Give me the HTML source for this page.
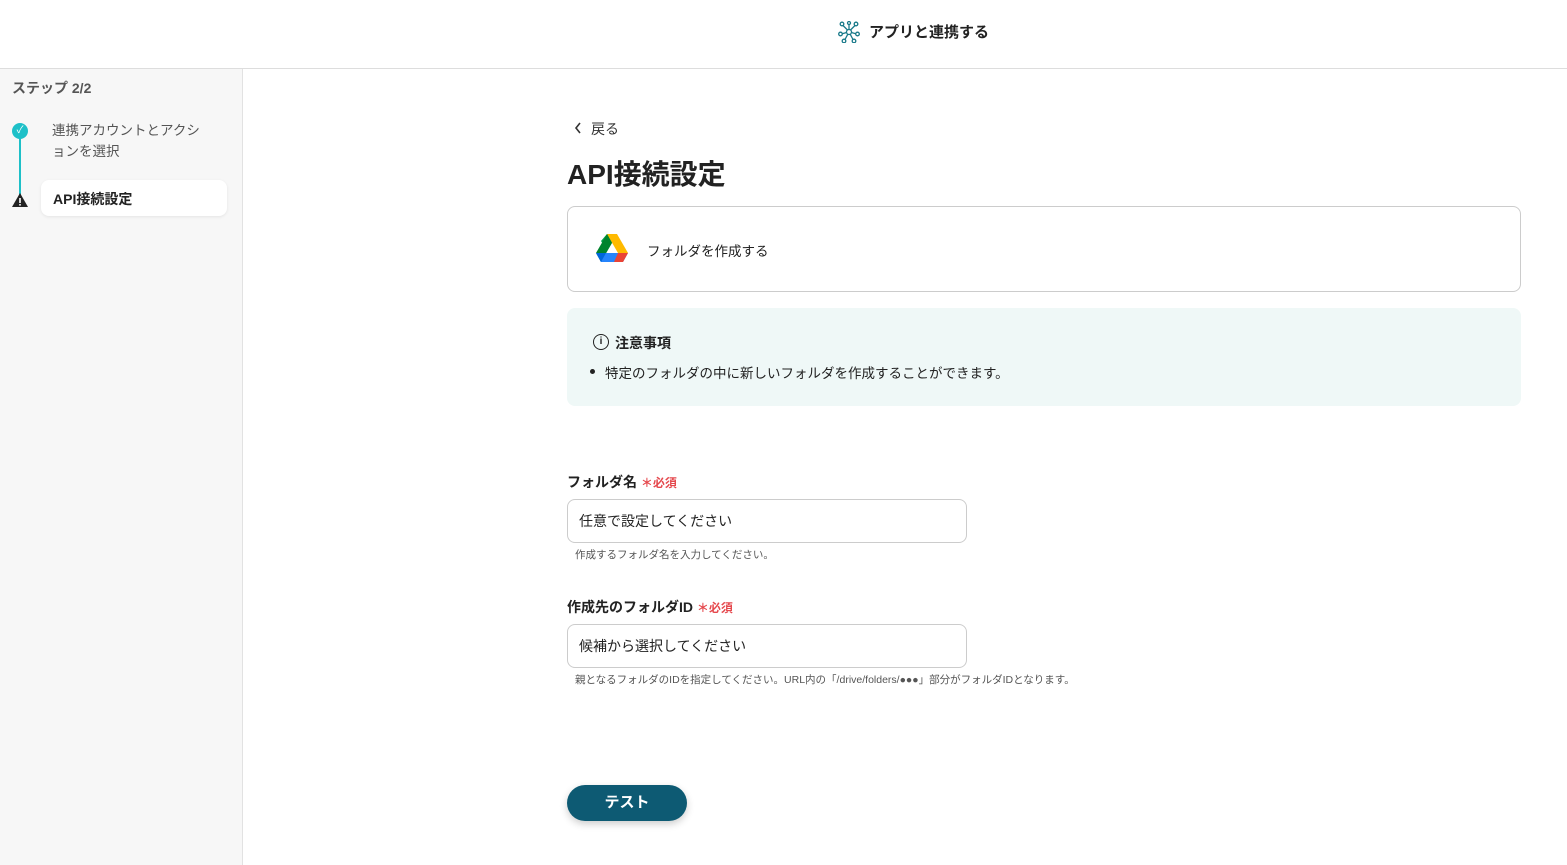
<!DOCTYPE html>
<html><head><meta charset="utf-8"><style>
*{box-sizing:border-box;margin:0;padding:0}
body{width:1567px;height:865px;overflow:hidden;background:#fff;font-family:"Liberation Sans","Noto Sans CJK JP",sans-serif;color:#222;position:relative}
.hdr{position:absolute;left:0;top:0;width:1567px;height:69px;border-bottom:1px solid #ddd;background:#fff}
.side{position:absolute;left:0;top:69px;width:243px;height:796px;background:#f7f7f7;border-right:1px solid #e2e2e2}
.abs{position:absolute}
</style></head><body>
<div class="hdr">
<svg class="abs" style="left:838px;top:21px" width="22" height="22" viewBox="0 0 22 22" fill="none" stroke="#1a7a8a" stroke-width="1.3"><circle cx="11" cy="11" r="2.5"/><circle cx="4" cy="3" r="1.8"/><circle cx="18" cy="3" r="1.8"/><circle cx="2.5" cy="13" r="1.8"/><circle cx="19.5" cy="13" r="1.8"/><circle cx="6" cy="20" r="1.8"/><circle cx="16" cy="20" r="1.8"/><circle cx="11" cy="2" r="1.5"/><path d="M9.5 9L5 4.5M12.5 9L17 4.5M8.6 11.5L4.2 12.7M13.4 11.5L17.8 12.7M9.8 13.2L7 18.5M12.2 13.2L15 18.5M11 8.5V3.5"/></svg>
<div class="abs" style="left:869px;top:21px;font-size:15px;font-weight:bold">アプリと連携する</div>
</div>
<div class="side">
<div class="abs" style="left:12px;top:9px;font-size:14px;font-weight:bold;color:#555">ステップ 2/2</div>
<div class="abs" style="left:19px;top:62px;width:2px;height:68px;background:#1ec0c8"></div>
<div class="abs" style="left:12px;top:54px;width:16px;height:16px;border-radius:50%;background:#1ec0c8;color:#fff;font-size:10px;text-align:center;line-height:16px">✓</div>
<div class="abs" style="left:52px;top:51px;font-size:13.5px;line-height:21px;color:#555;width:160px">連携アカウントとアクションを選択</div>
<svg class="abs" style="left:11px;top:123px" width="18" height="16" viewBox="0 0 18 16"><path d="M9 1L17 15H1Z" fill="#222"/><rect x="8.2" y="6" width="1.6" height="5" fill="#fff"/><rect x="8.2" y="12" width="1.6" height="1.6" fill="#fff"/></svg>
<div class="abs" style="left:41px;top:111px;width:186px;height:36px;background:#fff;border-radius:8px;box-shadow:0 1px 3px rgba(0,0,0,.08);font-size:14px;font-weight:bold;padding:9px 12px">API接続設定</div>
</div>
<svg class="abs" style="left:574px;top:122px" width="8" height="12" viewBox="0 0 8 12"><path d="M6 1L2 6l4 5" fill="none" stroke="#333" stroke-width="1.6"/></svg>
<div class="abs" style="left:591px;top:119px;font-size:14px;color:#333">戻る</div>
<div class="abs" style="left:567px;top:153px;font-size:28px;font-weight:bold">API接続設定</div>
<div class="abs" style="left:567px;top:206px;width:954px;height:86px;border:1px solid #ccc;border-radius:8px"></div>
<svg class="abs" style="left:596px;top:234px" width="32" height="29" viewBox="0 0 32 29"><path d="M11 0h10L11 17 5 7z" fill="#00a14b"/><path d="M21 0l11 19h-10L11 0z" fill="#ffba00"/><path d="M11 0L0 19l5 9 11-19z" fill="#00832d"/><path d="M0 19h32l-5 9H5z" fill="#2684fc"/><path d="M22 19h10l-5 9h-9z" fill="#ea4335"/><path d="M0 19l5 9 5-9z" fill="#0066da"/></svg>
<div class="abs" style="left:647px;top:240px;font-size:13.5px">フォルダを作成する</div>
<div class="abs" style="left:567px;top:308px;width:954px;height:98px;background:#eff8f7;border-radius:8px"></div>
<div class="abs" style="left:593px;top:334px;width:16px;height:16px;border:1.5px solid #222;border-radius:50%;font-size:10px;text-align:center;line-height:13px;font-weight:bold">i</div>
<div class="abs" style="left:615px;top:333px;font-size:14px;font-weight:bold">注意事項</div>
<div class="abs" style="left:590px;top:369px;width:5px;height:5px;border-radius:50%;background:#222"></div>
<div class="abs" style="left:605px;top:362px;font-size:13.5px">特定のフォルダの中に新しいフォルダを作成することができます。</div>
<div class="abs" style="left:567px;top:472px;font-size:14px;font-weight:bold">フォルダ名 <span style="color:#e5484d;font-size:12px">＊必須</span></div>
<div class="abs" style="left:567px;top:499px;width:400px;height:44px;border:1px solid #ccc;border-radius:8px;font-size:14px;padding:11px 11px">任意で設定してください</div>
<div class="abs" style="left:575px;top:547px;font-size:10.5px;color:#555">作成するフォルダ名を入力してください。</div>
<div class="abs" style="left:567px;top:597px;font-size:14px;font-weight:bold">作成先のフォルダID <span style="color:#e5484d;font-size:12px">＊必須</span></div>
<div class="abs" style="left:567px;top:624px;width:400px;height:44px;border:1px solid #ccc;border-radius:8px;font-size:14px;padding:11px 11px">候補から選択してください</div>
<div class="abs" style="left:575px;top:672px;font-size:10.5px;color:#555">親となるフォルダのIDを指定してください。URL内の「/drive/folders/●●●」部分がフォルダIDとなります。</div>
<div class="abs" style="left:567px;top:785px;width:120px;height:36px;border-radius:18px;background:#0d5a73;color:#fff;font-size:15px;font-weight:bold;text-align:center;line-height:36px;box-shadow:0 3px 8px rgba(0,0,0,.2)">テスト</div>
</body></html>
